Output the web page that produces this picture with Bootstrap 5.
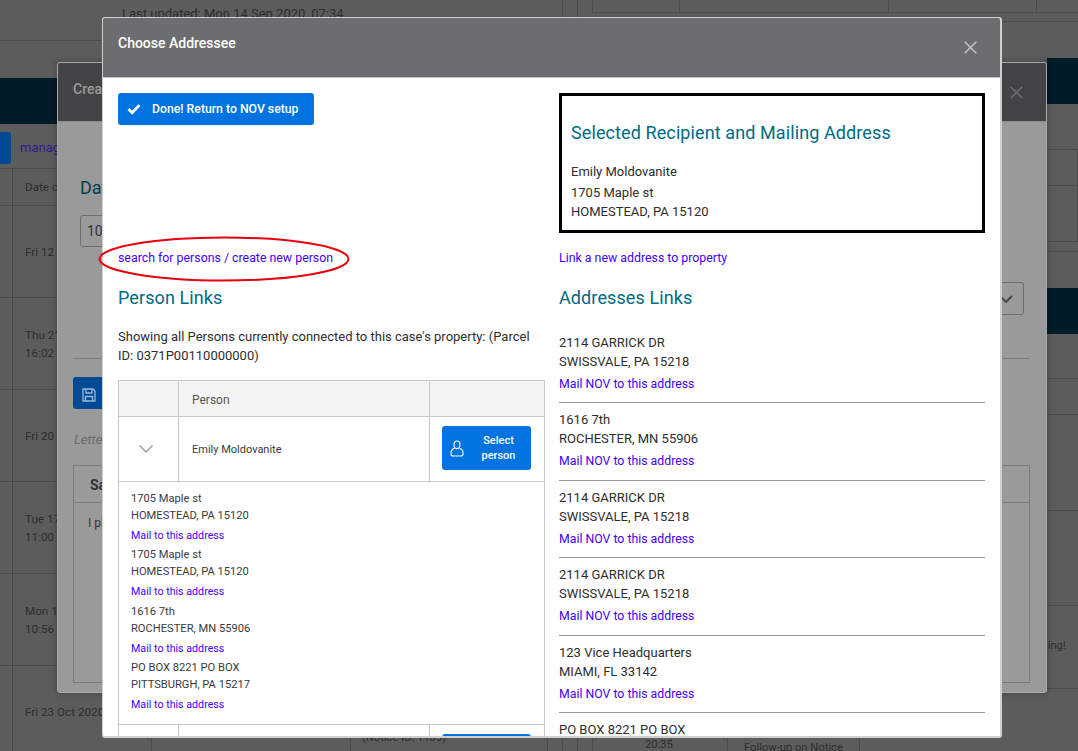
<!DOCTYPE html>
<html lang="en">
<head>
<meta charset="UTF-8">
<meta name="viewport" content="width=device-width, initial-scale=1.0">
<title>Choose Addressee</title>
<link href="https://cdn.jsdelivr.net/npm/bootstrap@5.3.0/dist/css/bootstrap.min.css" rel="stylesheet">
<style>
  html, body { height: 100%; }
  body {
    background: #5c5c5c;
    color: #2d2d2d;
    font-family: Roboto, "Liberation Sans", sans-serif;
    font-size: 13px;
    overflow: hidden;
    position: relative;
  }
  a { color: #4400ff; text-decoration: none; }

  /* page under the dialogs */
  .page-left { position: absolute; left: 0; top: 0; width: 560px; height: 751px; overflow: hidden; }
  .page-updated { padding-left: 122px; height: 41px; border-bottom: 1px solid #4b4b4b; padding-top: 5px; line-height: 18px; }
  .page-navy { background: #001b28; height: 46px; margin-top: 37px; }
  .page-tool { height: 44px; padding-top: 8px; display: flex; }
  .page-tool-btn { width: 11px; height: 32px; background: #004a94; border-radius: 0 3px 3px 0; margin-right: 9px; }
  .page-tool a { line-height: 32px; color: #2c1a8c; }
  .page-row { height: 92px; border-top: 1px solid #4b4b4b; padding-left: 25px; position: relative; display: flex; align-items: center; line-height: 18px; font-size: 11.7px; }
  .page-row-head { height: 37px; }
  .page-left::after { content: ""; position: absolute; left: 12px; top: 168px; bottom: 0; border-left: 1px solid #4b4b4b; }

  .page-right { position: absolute; left: 1047px; top: 0; right: 0; height: 751px; overflow: hidden; }
  .page-line { height: 1px; background: #4b4b4b; position: absolute; left: 0; right: 0; }
  .page-navy-r { background: #001b28; position: absolute; left: 0; right: 0; height: 46px; }
  .page-vline { position: absolute; width: 1px; background: #4b4b4b; }
  .page-text { position: absolute; white-space: nowrap; line-height: 16px; font-size: 11.2px; }

  /* dialog behind */
  .back-dlg {
    position: absolute; left: 57px; top: 62px; width: 990px; height: 631px;
    background: #9a9a9a; border: 1px solid #a8a8a8; border-radius: 3px; overflow: hidden;
    box-shadow: 0 0 6px rgba(0,0,0,.3);
  }
  .back-head { height: 59px; background: #434345; color: #9a9a9a; font-weight: 500; font-size: 14px; padding: 16px 15px; border-bottom: 1px solid #8a8a8a; }
  .back-close { margin: 7px 8px 0 0; }
  .back-body { position: relative; height: 570px; color: #333; }
  .back-title { position: absolute; left: 22px; top: 52px; font-size: 18px; color: #00404f; }
  .back-input { position: absolute; left: 22px; top: 93px; width: 120px; height: 32px; border: 1px solid #6e6e6e; border-radius: 3px; padding: 5px 6px; font-size: 14px; }
  .back-select { position: absolute; right: 22px; top: 160px; width: 60px; height: 33px; border: 1px solid #6e6e6e; border-radius: 3px; }
  .back-select svg { position: absolute; right: 10px; top: 12px; }
  .back-hr { position: absolute; left: 15px; right: 16px; top: 236px; height: 1px; background: #7c7c7c; }
  .back-save { position: absolute; left: 15px; top: 255px; width: 60px; height: 32px; background: #004a94; border-radius: 3px; padding: 7px 8px; }
  .back-letter { position: absolute; left: 16px; top: 308px; font-style: italic; color: #6a6a6a; font-size: 13px; }
  .back-table { position: absolute; left: 15px; right: 16px; top: 343px; height: 218px; border: 1px solid #7c7c7c; }
  .back-table-head { height: 37px; border-bottom: 1px solid #7c7c7c; padding: 9px 16px; font-weight: 700; font-size: 14px; }
  .back-table-body { padding: 11px 14px; font-size: 12px; }

  /* front dialog */
  .front-dlg {
    position: absolute; left: 102px; top: 17px; width: 900px; height: 721px;
    background: #fff; border: 1px solid #cfcfcf; border-bottom-width: 2px; border-right-width: 2px;
    border-radius: 3px; overflow: hidden;
  }
  .front-dlg .modal-header {
    height: 60px; background: #6c6d70; color: #fff; padding: 0 15px; border-bottom: 1px solid #c8c8c8; border-radius: 0;
  }
  .front-dlg .modal-title { font-size: 14px; font-weight: 500; line-height: 1; margin-top: -10px; }
  .front-close { background: none; border: 0; padding: 0; line-height: 0; margin-right: 8px; }
  .front-dlg .modal-body { padding: 15px 15px 0; display: grid; grid-template-columns: 427px 426px; column-gap: 14px; }

  .done-btn {
    background: #0073e0; border: 0; border-radius: 3px; height: 32px; width: 196px; padding: 0 0 0 9px;
    font-size: 12.25px; font-weight: 500; display: flex; align-items: center; gap: 11px; color: #fff;
  }
  .top-slot { height: 140px; }
  .picked-box { height: 140px; border: 3px solid #000; padding: 26px 9px 0; line-height: 20px; }
  .picked-box h5 { margin-bottom: 18px; }
  .picked-addr { line-height: 19px; margin-top: 1px; }
  h5.teal { color: #006b84; font-size: 18px; font-weight: 400; line-height: 22px; letter-spacing: .1px; }
  .link-line { font-size: 12.35px; line-height: 16px; margin-top: 17px; }
  .section-head { margin: 21px 0 18px; }
  .intro { line-height: 19px; margin-bottom: 15px; }

  .person-table { width: 426px; margin: 0; border-color: #c8c8c8; table-layout: fixed; font-size: 11px; }
  .person-table > :not(caption) > * > * { padding: 0; vertical-align: middle; color: #3a3a3a; }
  .person-table thead th { background: #f4f4f4; height: 36px; font-weight: 400; font-size: 12px; padding: 2px 0 0 13px; color: #555; }
  .person-table td.chevron-cell { text-align: center; padding-right: 6px; }
  .person-table td.name-cell { padding: 2px 0 0 13px; height: 65px; }
  .person-table td.expand-cell { padding: 8px 12px 0; height: 243px; vertical-align: top; font-size: 11.15px; line-height: 17px; }
  .person-table td.cut-cell { vertical-align: top; }
  .addr-item { margin-bottom: 2.4px; }
  .addr-item a { display: block; margin-top: 3px; font-size: 10.7px; }
  .select-btn {
    width: 89px; height: 44px; background: #0073e0; border: 0; border-radius: 3px; margin: -2px 0 0 12px;
    padding: 0 0 0 8px; display: flex; align-items: center; color: #fff; font-size: 11px; font-weight: 500; line-height: 15px;
  }
  .select-btn span { flex: 1; text-align: center; padding-left: 2px; }
  .select-btn-cut { height: 30px; margin-top: 9px; border-radius: 3px 3px 0 0; }

  .addr-row { line-height: 19px; padding-bottom: 8px; margin-bottom: 7px; border-bottom: 1px solid #999; height: 70.4px; }
  .addr-row a { display: block; margin-top: 4px; font-size: 12.3px; }
  .addr-list { margin-top: 24px; }

  .red-ring { position: absolute; left: 98px; top: 236px; }
</style>
</head>
<body>

<!-- page under the dialogs, left part -->
<div class="page-left">
  <div class="page-updated">Last updated: Mon 14 Sep 2020, 07:34</div>
  <div class="page-navy"></div>
  <div class="page-tool"><div class="page-tool-btn"></div><a href="#">manage</a></div>
  <div class="page-row page-row-head">Date of</div>
  <div class="page-row">Fri 12 Feb</div>
  <div class="page-row">Thu 21 Jan<br>16:02</div>
  <div class="page-row">Fri 20 Nov</div>
  <div class="page-row">Tue 17 Nov<br>11:00</div>
  <div class="page-row">Mon 16 Nov<br>10:56</div>
  <div class="page-row">Fri 23 Oct 2020, 20:35</div>
</div>

<!-- page under the dialogs, right and top/bottom leftovers -->
<div class="page-vline" style="left:562px;top:0;height:17px"></div>
<div class="page-vline" style="left:577px;top:0;height:17px"></div>
<div class="page-vline" style="left:592px;top:0;height:12px"></div>
<div class="page-vline" style="left:679px;top:0;height:12px"></div>
<div class="page-vline" style="left:888px;top:0;height:12px"></div>
<div class="page-vline" style="left:1036px;top:0;height:12px"></div>
<div class="page-line" style="left:592px;top:12px"></div>
<div class="page-line" style="left:562px;top:21px"></div>
<div class="page-vline" style="left:151px;top:738px;height:13px"></div>
<div class="page-vline" style="left:350px;top:738px;height:13px"></div>
<div class="page-vline" style="left:547px;top:738px;height:13px"></div>
<div class="page-vline" style="left:562px;top:738px;height:13px"></div>
<div class="page-vline" style="left:577px;top:738px;height:13px"></div>
<div class="page-vline" style="left:592px;top:738px;height:13px"></div>
<div class="page-vline" style="left:727px;top:738px;height:13px"></div>
<div class="page-vline" style="left:859px;top:738px;height:13px"></div>
<div class="page-text" style="left:362px;top:730px">(Notice ID: 1135)</div>
<div class="page-text" style="left:645px;top:737px">20:35</div>
<div class="page-text" style="left:744px;top:740px">Follow-up on Notice</div>

<div class="page-right">
  <div class="page-line" style="top:21px"></div>
  <div class="page-navy-r" style="top:58px"></div>
  <div class="page-line" style="top:149px"></div>
  <div class="page-line" style="top:185px"></div>
  <div class="page-line" style="top:241px"></div>
  <div class="page-line" style="top:251px"></div>
  <div class="page-navy-r" style="top:288px"></div>
  <div class="page-line" style="top:378px"></div>
  <div class="page-line" style="top:414px"></div>
  <div class="page-line" style="top:510px"></div>
  <div class="page-line" style="top:605px"></div>
  <div class="page-line" style="top:688px"></div>
  <div class="page-vline" style="left:30px;top:149px;height:92px"></div>
  <div class="page-text" style="left:-3px;top:638px">ting!</div>
</div>

<!-- dialog behind -->
<div class="back-dlg">
  <div class="back-head d-flex justify-content-between">
    <span>Create</span>
    <svg class="back-close" width="13" height="13" viewBox="0 0 13 13"><path d="M.7.7l11.600 11.600M12.300.7L.7 12.300" stroke="#6f6f71" stroke-width="1.500"/></svg>
  </div>
  <div class="back-body">
    <div class="back-title">Date</div>
    <div class="back-input">10,</div>
    <div class="back-select"><svg width="14" height="9" viewBox="0 0 14 9"><path d="M1 1l6 6 6-6" fill="none" stroke="#444" stroke-width="1.800"/></svg></div>
    <div class="back-hr"></div>
    <div class="back-save">
      <svg width="16" height="16" viewBox="0 0 16 16" fill="none" stroke="#9db8d8" stroke-width="1.300"><path d="M2 2h10l2 2v10H2z"/><path d="M5 2v4h6V2M4.500 14V9.500h7V14"/></svg>
    </div>
    <div class="back-letter">Letter</div>
    <div class="back-table">
      <div class="back-table-head">Salutation</div>
      <div class="back-table-body">I pledge to</div>
    </div>
  </div>
</div>

<!-- front dialog -->
<div class="front-dlg modal-content">
  <div class="modal-header">
    <h5 class="modal-title">Choose Addressee</h5>
    <button class="front-close ms-auto" type="button" aria-label="Close">
      <svg width="13" height="13" viewBox="0 0 13 13"><path d="M.7.7l11.600 11.600M12.300.7L.7 12.300" stroke="#c4c5c7" stroke-width="1.500"/></svg>
    </button>
  </div>
  <div class="modal-body">
    <div>
      <div class="top-slot">
        <button class="done-btn" type="button">
          <svg width="14" height="12" viewBox="0 0 14 12"><path d="M1.500 6l3.700 3.700 7.300-7.600" fill="none" stroke="#fff" stroke-width="2.800"/></svg>
          Done! Return to NOV setup
        </button>
      </div>
      <div class="link-line"><a href="#">search for persons / create new person</a></div>
      <h5 class="teal section-head">Person Links</h5>
      <p class="intro">Showing all Persons currently connected to this case's property: (Parcel ID: 0371P00110000000)</p>
      <table class="table table-bordered person-table">
        <colgroup><col style="width:60px"><col style="width:251px"><col style="width:115px"></colgroup>
        <thead><tr><th></th><th>Person</th><th></th></tr></thead>
        <tbody>
          <tr>
            <td class="chevron-cell">
              <svg width="16" height="10" viewBox="0 0 16 10"><path d="M1.500 1.500l6.500 6.500 6.500-6.500" fill="none" stroke="#a0a0a0" stroke-width="1.500"/></svg>
            </td>
            <td class="name-cell">Emily Moldovanite</td>
            <td>
              <button class="select-btn" type="button">
                <svg width="14" height="17" viewBox="0 0 14 17" fill="none" stroke="#fff" stroke-width="1.100"><path d="M4 4.800a3 3.800 0 1 1 6 0a3 3.800 0 1 1-6 0z"/><path d="M4.500 8.200C2.300 9 1 10.300 1 12.500v1.500c0 1.300.8 2 2 2h8c1.200 0 2-.7 2-2v-1.500c0-2.200-1.300-3.500-3.500-4.300"/></svg>
                <span>Select person</span>
              </button>
            </td>
          </tr>
          <tr>
            <td colspan="3" class="expand-cell">
              <div class="addr-item">1705 Maple st<br>HOMESTEAD, PA 15120<a href="#">Mail to this address</a></div>
              <div class="addr-item">1705 Maple st<br>HOMESTEAD, PA 15120<a href="#">Mail to this address</a></div>
              <div class="addr-item">1616 7th<br>ROCHESTER, MN 55906<a href="#">Mail to this address</a></div>
              <div class="addr-item">PO BOX 8221 PO BOX<br>PITTSBURGH, PA 15217<a href="#">Mail to this address</a></div>
            </td>
          </tr>
          <tr>
            <td></td><td class="name-cell"></td>
            <td class="cut-cell"><div class="select-btn select-btn-cut"></div></td>
          </tr>
        </tbody>
      </table>
    </div>
    <div>
      <div class="picked-box">
        <h5 class="teal">Selected Recipient and Mailing Address</h5>
        <div>Emily Moldovanite</div>
        <div class="picked-addr">1705 Maple st<br>HOMESTEAD, PA 15120</div>
      </div>
      <div class="link-line"><a href="#">Link a new address to property</a></div>
      <h5 class="teal section-head">Addresses Links</h5>
      <div class="addr-list">
        <div class="addr-row">2114 GARRICK DR<br>SWISSVALE, PA 15218<a href="#">Mail NOV to this address</a></div>
        <div class="addr-row">1616 7th<br>ROCHESTER, MN 55906<a href="#">Mail NOV to this address</a></div>
        <div class="addr-row">2114 GARRICK DR<br>SWISSVALE, PA 15218<a href="#">Mail NOV to this address</a></div>
        <div class="addr-row">2114 GARRICK DR<br>SWISSVALE, PA 15218<a href="#">Mail NOV to this address</a></div>
        <div class="addr-row">123 Vice Headquarters<br>MIAMI, FL 33142<a href="#">Mail NOV to this address</a></div>
        <div class="addr-row">PO BOX 8221 PO BOX<br>PITTSBURGH, PA 15217<a href="#">Mail NOV to this address</a></div>
      </div>
    </div>
  </div>
</div>

<svg class="red-ring" width="252" height="46" viewBox="0 0 252 46"><ellipse cx="126" cy="23" rx="124.500" ry="21.500" fill="none" stroke="#e8000f" stroke-width="2"/></svg>

<script src="https://cdn.jsdelivr.net/npm/bootstrap@5.3.0/dist/js/bootstrap.bundle.min.js"></script>
</body>
</html>
